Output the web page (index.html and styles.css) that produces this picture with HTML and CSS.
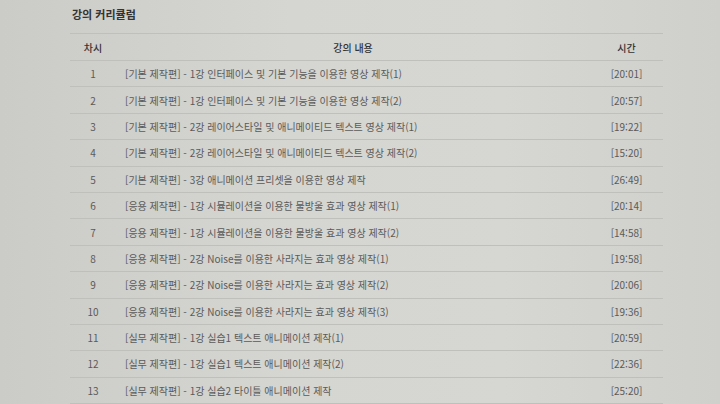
FILE: index.html
```html
<!DOCTYPE html>
<html lang="ko">
<head>
<meta charset="utf-8">
<link rel="stylesheet" href="styles.css">
</head>
<body>
<div class="wrap">
  <h2 class="title">강의 커리큘럼</h2>
  <table class="curri">
    <thead>
      <tr><th class="no">차시</th><th class="name">강의 내용</th><th class="time">시간</th></tr>
    </thead>
    <tbody>
      <tr><td class="no">1</td><td class="name">[기본 제작편] - 1강 인터페이스 및 기본 기능을 이용한 영상 제작(1)</td><td class="time">[20:01]</td></tr>
      <tr><td class="no">2</td><td class="name">[기본 제작편] - 1강 인터페이스 및 기본 기능을 이용한 영상 제작(2)</td><td class="time">[20:57]</td></tr>
      <tr><td class="no">3</td><td class="name">[기본 제작편] - 2강 레이어스타일 및 애니메이티드 텍스트 영상 제작(1)</td><td class="time">[19:22]</td></tr>
      <tr><td class="no">4</td><td class="name">[기본 제작편] - 2강 레이어스타일 및 애니메이티드 텍스트 영상 제작(2)</td><td class="time">[15:20]</td></tr>
      <tr><td class="no">5</td><td class="name">[기본 제작편] - 3강 애니메이션 프리셋을 이용한 영상 제작</td><td class="time">[26:49]</td></tr>
      <tr><td class="no">6</td><td class="name">[응용 제작편] - 1강 시뮬레이션을 이용한 물방울 효과 영상 제작(1)</td><td class="time">[20:14]</td></tr>
      <tr><td class="no">7</td><td class="name">[응용 제작편] - 1강 시뮬레이션을 이용한 물방울 효과 영상 제작(2)</td><td class="time">[14:58]</td></tr>
      <tr><td class="no">8</td><td class="name">[응용 제작편] - 2강 Noise를 이용한 사라지는 효과 영상 제작(1)</td><td class="time">[19:58]</td></tr>
      <tr><td class="no">9</td><td class="name">[응용 제작편] - 2강 Noise를 이용한 사라지는 효과 영상 제작(2)</td><td class="time">[20:06]</td></tr>
      <tr><td class="no">10</td><td class="name">[응용 제작편] - 2강 Noise를 이용한 사라지는 효과 영상 제작(3)</td><td class="time">[19:36]</td></tr>
      <tr><td class="no">11</td><td class="name">[실무 제작편] - 1강 실습1 텍스트 애니메이션 제작(1)</td><td class="time">[20:59]</td></tr>
      <tr><td class="no">12</td><td class="name">[실무 제작편] - 1강 실습1 텍스트 애니메이션 제작(2)</td><td class="time">[22:36]</td></tr>
      <tr><td class="no">13</td><td class="name">[실무 제작편] - 1강 실습2 타이틀 애니메이션 제작</td><td class="time">[25:20]</td></tr>
    </tbody>
  </table>
</div>
</body>
</html>
```
FILE: styles.css
```css
html, body {
  margin: 0;
  padding: 0;
}
body {
  background: linear-gradient(90deg, #cbcbc7 0%, #d5d5d1 40%, #d6d6d2 70%, #cfcfcb 100%);
  font-family: "Noto Sans CJK KR", "Noto Sans", sans-serif;
  color: #5a5a5a;
  overflow: hidden;
  height: 404px;
}
.wrap {
  padding: 6px 0 0 70px;
  width: 593px;
}
.title {
  margin: 0 0 0 2px;
  font-size: 11px;
  line-height: 16px;
  font-weight: 700;
  color: #333;
}
.curri {
  margin-top: 11px;
  width: 593px;
  border-collapse: collapse;
  border-top: 1px solid #bfbfbb;
  font-size: 10px;
}
.curri th {
  height: 26px;
  padding: 0;
  font-weight: 500;
  font-size: 10px;
  color: #333;
  border-bottom: 1px solid #bfbfbb;
}
.curri td {
  height: 25.4px;
  padding: 0;
  border-bottom: 1px solid #bfbfbb;
}
.curri .no {
  width: 46px;
  text-align: center;
}
.curri td.name {
  padding-left: 9px;
  text-align: left;
}
.curri th.name {
  text-align: center;
}
.curri .time {
  width: 73px;
  text-align: center;
}
```
